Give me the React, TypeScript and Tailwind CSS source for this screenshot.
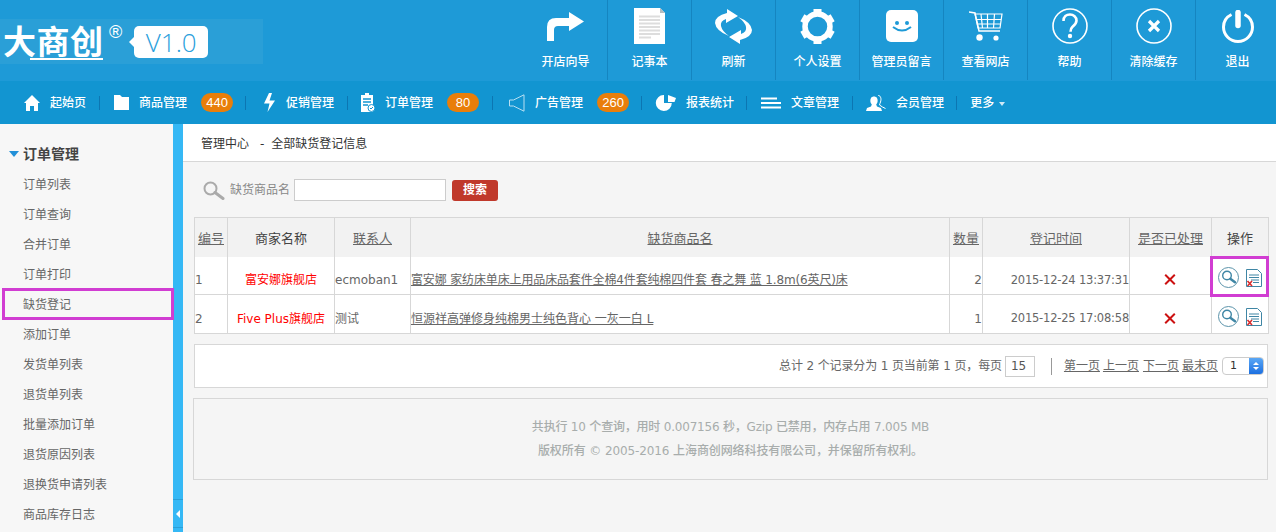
import React from "react";

const FONT = "font-['DejaVu_Sans','Noto_Sans_CJK_SC',sans-serif]";

const W = "#ffffff";
const BG = "#1e9ad7";

const TopIcons: Record<string, React.ReactNode> = {
  guide: (
    <svg width="37" height="29" viewBox="0 0 37 29">
      <path d="M0 29V15Q0 6 9 6H22V0L37 9.500 22 19V14H11Q7 14 7 18V29z" fill={W} />
    </svg>
  ),
  note: (
    <svg width="31" height="36" viewBox="0 0 31 36">
      <path d="M0 0h26l5 5v31H0z" fill={W} />
      <path d="M26 0l5 5h-5z" fill="#b5bcc0" />
      <path d="M5 8.500h21M5 12h21M5 15.500h21M5 19h21M5 22.500h21M5 26h21" stroke="#dddddd" strokeWidth="2" />
      <path d="M5 29.500h12" stroke="#dddddd" strokeWidth="2" />
    </svg>
  ),
  refresh: (
    <svg width="37" height="35" viewBox="0 0 37 35">
      <path d="M12 0L23 7 11 14V10Q5 12 6 17 7 22 14 27 1 22 0 14 0 7 12 4z" fill={W} />
      <path d="M12 0L23 7 11 14V10Q5 12 6 17 7 22 14 27 1 22 0 14 0 7 12 4z" fill={W} transform="rotate(180 18.500 17.500)" />
    </svg>
  ),
  gear: (
    <svg width="35" height="35" viewBox="0 0 35 35">
      <circle cx="17.500" cy="17.500" r="12.500" fill="none" stroke={W} strokeWidth="5.500" />
      {[0, 60, 120, 180, 240, 300].map((a) => (
        <rect key={a} x="13.500" y="0" width="8" height="7" fill={W} transform={`rotate(${a} 17.500 17.500)`} />
      ))}
    </svg>
  ),
  msg: (
    <svg width="32" height="32" viewBox="0 0 32 32">
      <rect width="32" height="32" rx="5" fill={W} />
      <circle cx="11" cy="13" r="2" fill={BG} />
      <circle cx="21" cy="13" r="2" fill={BG} />
      <path d="M7 17q9 7 18 0" stroke={BG} strokeWidth="2" fill="none" />
    </svg>
  ),
  cart: (
    <svg width="34" height="30" viewBox="0 0 34 30" fill="none" stroke={W}>
      <path d="M0 1l6 1 4 18h21" strokeWidth="1.500" />
      <path d="M6 3h27l-2 14H9zM7.500 8.500h25M8.500 13h23M12 3l1.500 14M18.500 3v14M25.500 3l-1 14" strokeWidth="1.200" />
      <circle cx="10.500" cy="26.500" r="3.200" fill={W} stroke="none" />
      <circle cx="27" cy="27" r="2.600" fill={W} stroke="none" />
    </svg>
  ),
  help: (
    <svg width="36" height="36" viewBox="0 0 36 36" fill="none" stroke={W}>
      <circle cx="18" cy="18" r="17" strokeWidth="1.600" />
      <path d="M11.500 13c0-4.500 3-6.500 6.500-6.500s6.500 2.500 6.500 6c0 3-2 4.500-4 6.200-1.500 1.300-2 2.300-2 5" strokeWidth="2.600" />
      <circle cx="18" cy="28" r="2.200" fill={W} stroke="none" />
    </svg>
  ),
  clear: (
    <svg width="36" height="36" viewBox="0 0 36 36" fill="none" stroke={W}>
      <circle cx="18" cy="18" r="17" strokeWidth="1.600" />
      <path d="M13 13l10 10M23 13L13 23" strokeWidth="3.200" />
    </svg>
  ),
  exit: (
    <svg width="32" height="33" viewBox="0 0 32 33" fill="none" stroke={W}>
      <path d="M9.500 4.500C4.500 7 1.500 11.500 1.500 17c0 8 6.500 14.500 14.500 14.500S30.500 25 30.500 17c0-5.500-3-10-8-12.500" strokeWidth="3" />
      <path d="M16 2.500v13" strokeWidth="5.500" strokeLinecap="round" />
    </svg>
  ),
};

const topItems: [string, string][] = [
  ["guide", "开店向导"],
  ["note", "记事本"],
  ["refresh", "刷新"],
  ["gear", "个人设置"],
  ["msg", "管理员留言"],
  ["cart", "查看网店"],
  ["help", "帮助"],
  ["clear", "清除缓存"],
  ["exit", "退出"],
];

const Home = (
  <svg width="16" height="16" viewBox="0 0 16 16"><path d="M8 0l8 8h-2v8h-4v-5H6v5H2V8H0z" fill={W} /></svg>
);
const Folder = (
  <svg width="15" height="15" viewBox="0 0 15 15"><path d="M0 0h6l2 2h7v13H0z" fill={W} /></svg>
);
const Bolt = (
  <svg width="11" height="19" viewBox="0 0 11 19"><path d="M5 0h3L5.500 7.500H11L3.500 19l2-8.500H0z" fill={W} /></svg>
);
const Clip = (
  <svg width="15" height="19" viewBox="0 0 15 19">
    <path d="M5 0h4v2h4v17H1V2h4z" fill={W} />
    <path d="M3 6h8M3 9h8M3 12h5" stroke="#1295d1" strokeWidth="1.300" />
    <circle cx="11.500" cy="15" r="3.500" fill={W} stroke="#1295d1" />
    <path d="M10 15l1 1 2-2" stroke="#1295d1" fill="none" />
  </svg>
);
const Speaker = (
  <svg width="16" height="18" viewBox="0 0 16 18" fill="none" stroke="#b8dff2">
    <path d="M.5 6h4L15 .8v16.400L4.500 12h-4z" />
  </svg>
);
const Pie = (
  <svg width="21" height="16" viewBox="0 0 21 16">
    <path d="M9 0v8h7.800a8 8 0 1 1-7.800-8z" fill={W} />
    <path d="M13 0l8 3-1.500 4H13z" fill={W} />
  </svg>
);
const Lines = (
  <svg width="20" height="12" viewBox="0 0 20 12"><path d="M0 1.500h16M0 6h20M0 10.500h20" stroke={W} strokeWidth="2" /></svg>
);
const Members = (
  <svg width="20" height="16" viewBox="0 0 20 16">
    <path d="M0 16l1-3 4-1.500.8-2C4 7.500 4 5 5 3c1-2 5-2 6 0s1 4.500-.8 6.500l.8 2 4 1.500 1 3z" fill={W} />
    <path d="M12 0c3 1 3.500 4 2.500 7-.4 1.200-.8 2-1 3l3 2 3 1.500" stroke={W} fill="none" />
  </svg>
);

type NavItem = { icon: React.ReactNode; box: string; label: string; badge?: string };

const navItems: NavItem[] = [
  { icon: Home, box: "pl-[14px] pr-[13px]", label: "起始页" },
  { icon: Folder, box: "pl-[14px] pr-[12px]", label: "商品管理", badge: "440" },
  { icon: Bolt, box: "pl-[16px] pr-[13px]", label: "促销管理" },
  { icon: Clip, box: "pl-[12px] pr-[13px]", label: "订单管理", badge: "80" },
  { icon: Speaker, box: "pl-[15px] pr-[12px]", label: "广告管理", badge: "260" },
  { icon: Pie, box: "pl-[13px] pr-[12px]", label: "报表统计" },
  { icon: Lines, box: "pl-[14px] pr-[13px]", label: "文章管理" },
  { icon: Members, box: "pl-[13px] pr-[12px]", label: "会员管理" },
];
const navIconBox = ["w-[16px]", "w-[15px]", "w-[14px]", "w-[15px]", "w-[17px]", "w-[21px]", "w-[20px]", "w-[20px]"];

const sideItems = [
  "订单列表",
  "订单查询",
  "合并订单",
  "订单打印",
  "缺货登记",
  "添加订单",
  "发货单列表",
  "退货单列表",
  "批量添加订单",
  "退货原因列表",
  "退换货申请列表",
  "商品库存日志",
];

const MagIcon = () => (
  <svg width="21" height="21" viewBox="0 0 21 21" fill="none">
    <circle cx="10.500" cy="10.500" r="10" stroke="#5b93aa" strokeWidth="1" />
    <circle cx="9" cy="8.500" r="4.300" stroke="#3f86a5" strokeWidth="1.400" />
    <path d="M12.300 11.700l4.700 3.600" stroke="#3f86a5" strokeWidth="2.400" strokeLinecap="round" />
  </svg>
);

const DocIcon = () => (
  <svg width="16" height="18" viewBox="0 0 16 18" fill="none">
    <path d="M.5.500h11l4 4v13H.5z" stroke="#3f86a5" fill="#fff" />
    <path d="M3 6h10M3 8.500h10M5 11h8M7 13.500h6" stroke="#3f86a5" />
    <path d="M1.500 12l4.500 5M6 12l-4.500 5" stroke="#d92c2c" strokeWidth="1.600" />
  </svg>
);

const RedX = () => (
  <svg width="12" height="11" viewBox="0 0 12 11" className="mx-auto -translate-x-[1px]">
    <path d="M1.200.800l9.600 9.400M10.800.800L1.200 10.200" stroke="#cc1111" strokeWidth="2" />
  </svg>
);

const rows = [
  {
    id: "1",
    shop: "富安娜旗舰店",
    contact: "ecmoban1",
    goods: "富安娜 家纺床单床上用品床品套件全棉4件套纯棉四件套 春之舞 蓝 1.8m(6英尺)床",
    goodsCls: "tracking-[-0.14px]",
    qty: "2",
    time: "2015-12-24 13:37:31",
  },
  {
    id: "2",
    shop: "Five Plus旗舰店",
    contact: "测试",
    goods: "恒源祥高弹修身纯棉男士纯色背心 一灰一白 L",
    goodsCls: "",
    qty: "1",
    time: "2015-12-25 17:08:58",
  },
];

const headCell =
  "border border-[#d7d7d7] border-b-0 font-normal text-center text-[13px] p-0 pt-[2px] overflow-hidden whitespace-nowrap";
const bodyCell = "border border-[#d7d7d7] p-0 whitespace-nowrap overflow-hidden";

export default function App() {
  return (
    <div className={`${FONT} w-[1276px] h-[532px] overflow-hidden flex flex-col text-[12px] bg-[#f5f5f5]`}>
      {/* top bar */}
      <header className="h-[81px] shrink-0 bg-[#1e9ad7] flex overflow-hidden">
        <div className="w-[524px] shrink-0 pt-[19px]">
          <div className="w-[263px] h-[45px] bg-[#2a9fd7] flex items-start text-white">
            <div className="relative ml-[3px] mt-[3px] w-[100px] h-[38px]">
              <span className="block text-[33px] leading-[36px] font-bold tracking-[0.5px] font-['Noto_Sans_CJK_SC',sans-serif] whitespace-nowrap">
                大商创
              </span>
              <span className="absolute left-[27px] right-0 top-[36px] h-[2px] bg-white" />
            </div>
            <span className="text-[18px] leading-[18px] mt-[4px] ml-[6px] font-['Liberation_Sans',sans-serif]">®</span>
            <div className="relative ml-[12px] mt-[7px] w-[74px] h-[32px] bg-white rounded-[5px] flex items-center justify-center text-[#2aa0dc] text-[26px] font-light font-['Open_Sans',sans-serif]">
              <span className="absolute -left-[5px] top-[11px] w-0 h-0 border-y-[5px] border-y-transparent border-r-[5px] border-r-white" />
              V1.0
            </div>
          </div>
        </div>
        {topItems.map(([k, label]) => (
          <div key={k} className="w-[84px] shrink-0 flex flex-col items-center border-r border-r-[#1585c0] h-[80px]">
            <div className="h-[36px] mt-[8px] flex items-center justify-center">{TopIcons[k]}</div>
            <div className="mt-[11px] text-white font-medium leading-[14px] whitespace-nowrap">{label}</div>
          </div>
        ))}
      </header>

      {/* nav */}
      <nav className="h-[43px] shrink-0 bg-[#1295d1] flex items-center pl-[10px] text-white font-medium">
        {navItems.map((n, i) => (
          <div key={n.label} className={`flex items-center h-[14px] border-r border-r-[#0c76b2] ${n.box}`}>
            <span className={`${navIconBox[i]} flex justify-center shrink-0 mr-[10px]`}>{n.icon}</span>
            <span className="leading-[16px] whitespace-nowrap">{n.label}</span>
            {n.badge && (
              <span className="ml-[14px] w-[32px] h-[19px] rounded-full bg-[#e97e0a] text-center leading-[19px] font-['Liberation_Sans',sans-serif] text-[13px]">
                {n.badge}
              </span>
            )}
          </div>
        ))}
        <div className="flex items-center pl-[13px]">
          <span className="leading-[16px]">更多</span>
          <span className="ml-[5px] mt-[2px] w-0 h-0 border-x-[3px] border-x-transparent border-t-[4px] border-t-[#cfe9f6]" />
        </div>
      </nav>

      <div className="flex flex-1 min-h-0">
        {/* sidebar */}
        <aside className="w-[173px] shrink-0 bg-[#f7f7f7] pt-[15px]">
          <div className="h-[30px] flex items-center pl-[9px] text-[14px] font-bold text-[#444]">
            <span className="w-0 h-0 border-x-[5px] border-x-transparent border-t-[6px] border-t-[#2290d8] mr-[4px]" />
            订单管理
          </div>
          {sideItems.map((s) => (
            <div key={s} className="relative h-[30px] leading-[32px] pl-[23px] text-[#666] whitespace-nowrap">
              {s}
              {s === "缺货登记" && (
                <span className="absolute left-[2px] -right-[1px] -top-[1px] -bottom-[1px] border-[3px] border-[#d13dd2]" />
              )}
            </div>
          ))}
        </aside>
        <div className="w-[10px] shrink-0 bg-[#35b8f5] flex flex-col justify-end pb-[4px]">
          <div className="h-[29px] border-y border-y-[#2a9fd8] flex items-center pl-[3px]">
            <span className="w-0 h-0 border-y-[4px] border-y-transparent border-r-[4px] border-r-white" />
          </div>
        </div>

        {/* main */}
        <main className="flex-1 min-w-0 flex flex-col">
          <div className="h-[38px] shrink-0 bg-white border-b border-b-[#d7d7d7] flex items-center pl-[18px] pt-[2px] text-[#333]">
            <span>管理中心</span>
            <span className="ml-[11px] mr-[7px]">-</span>
            <span>全部缺货登记信息</span>
          </div>

          <div className="flex items-center h-[22px] mt-[17px] ml-[20px]">
            <svg width="22" height="19" viewBox="0 0 22 19" fill="none">
              <circle cx="7.500" cy="7.500" r="6" stroke="#aaa" strokeWidth="2" />
              <path d="M12 11.500l8 6" stroke="#aaa" strokeWidth="3" strokeLinecap="round" />
            </svg>
            <span className="ml-[5px] text-[#888] whitespace-nowrap">缺货商品名</span>
            <span className="ml-[4px] w-[152px] h-[22px] bg-white border border-[#ccc]" />
            <button className="ml-[6px] w-[46px] h-[21px] bg-[#c0392b] rounded-[3px] text-white font-bold">搜索</button>
          </div>

          <div className="ml-[11px] mr-[8px] mt-[16px]">
            <table className="w-[1074px] table-fixed border-collapse text-[#666]">
              <colgroup>
                <col className="w-[33px]" />
                <col className="w-[107px]" />
                <col className="w-[76px]" />
                <col className="w-[539px]" />
                <col className="w-[33px]" />
                <col className="w-[147px]" />
                <col className="w-[82px]" />
                <col className="w-[57px]" />
              </colgroup>
              <thead>
                <tr className="h-[39px] bg-[#f2f2f2]">
                  <th className={headCell}><u>编号</u></th>
                  <th className={`${headCell} text-[#444]`}>商家名称</th>
                  <th className={headCell}><u>联系人</u></th>
                  <th className={headCell}><u>缺货商品名</u></th>
                  <th className={headCell}><u>数量</u></th>
                  <th className={headCell}><u>登记时间</u></th>
                  <th className={headCell}><u>是否已处理</u></th>
                  <th className={`${headCell} text-[#444]`}>操作</th>
                </tr>
              </thead>
              <tbody>
                {rows.map((r, i) => {
                  const td = `${bodyCell} ${i === 0 ? "border-t-0" : ""}`;
                  return (
                    <tr key={r.id} className={`${i === 0 ? "h-[38px]" : "h-[39px]"} bg-white`}>
                      <td className={`${td} pt-[10px]`}>{r.id}</td>
                      <td className={`${td} pt-[10px] text-center text-[#ff0000]`}>{r.shop}</td>
                      <td className={`${td} pt-[10px]`}>{r.contact}</td>
                      <td className={`${td} pt-[10px] ${r.goodsCls}`}><u>{r.goods}</u></td>
                      <td className={`${td} pt-[10px] text-right`}>{r.qty}</td>
                      <td className={`${td} pt-[10px] text-right text-[11.5px] tracking-[-0.2px]`}>{r.time}</td>
                      <td className={`${td} pt-[8px]`}><RedX /></td>
                      <td className={`${td} pt-[5px] relative overflow-visible`}>
                        <div className="flex items-center justify-center gap-[7px]">
                          <MagIcon />
                          <DocIcon />
                        </div>
                        {i === 0 && (
                          <span className="absolute -left-[2px] -right-[1px] -top-[1px] -bottom-[3px] border-[3px] border-[#d13dd2]" />
                        )}
                      </td>
                    </tr>
                  );
                })}
              </tbody>
            </table>
          </div>

          <div className="ml-[11px] mr-[8px] mt-[10px] h-[44px] bg-white border border-[#d7d7d7] flex items-center justify-end text-[#666] pr-[3px] whitespace-nowrap">
            <span className="tracking-[-0.12px]">总计 2 个记录分为 1 页当前第 1 页，每页</span>
            <span className="ml-[3px] w-[30px] h-[21px] border border-[#ccc] pl-[5px] leading-[19px] text-[#555]">15</span>
            <span className="ml-[16px] mr-[12px] w-px h-[17px] bg-[#999]" />
            <u>第一页</u>
            <u className="ml-[3px]">上一页</u>
            <u className="ml-[4px]">下一页</u>
            <u className="ml-[3px]">最末页</u>
            <span className="ml-[4px] w-[42px] h-[18px] bg-white border border-[#ccc] rounded-[4px] flex items-center justify-between overflow-hidden pl-[7px] text-[11px] text-[#333]">
              1
              <span className="w-[14px] h-full bg-gradient-to-b from-[#5aa7f5] to-[#1b6fe0] flex flex-col items-center justify-center gap-[2px]">
                <span className="w-0 h-0 border-x-[3px] border-x-transparent border-b-[3px] border-b-white" />
                <span className="w-0 h-0 border-x-[3px] border-x-transparent border-t-[3px] border-t-white" />
              </span>
            </span>
          </div>

          <div className="ml-[10px] mr-[8px] mt-[10px] h-[82px] border border-[#d7d7d7] flex flex-col items-center justify-center text-[#a8adac] leading-[24px] font-medium">
            <div className="tracking-[-0.2px]">共执行 10 个查询，用时 0.007156 秒，Gzip 已禁用，内存占用 7.005 MB</div>
            <div className="tracking-[-0.1px]">版权所有 © 2005-2016 上海商创网络科技有限公司，并保留所有权利。</div>
          </div>
        </main>
      </div>
    </div>
  );
}
